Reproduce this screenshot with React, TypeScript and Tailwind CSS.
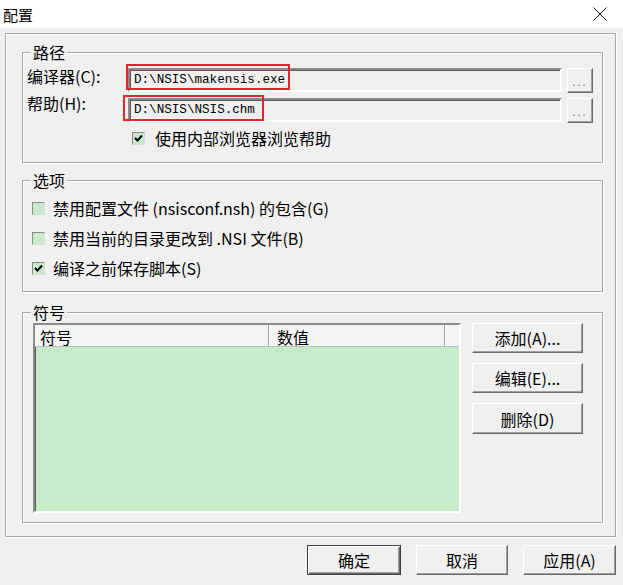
import React from 'react';

const sunken =
  'border-2 border-t-[#8a8a8a] border-l-[#8a8a8a] border-r-white border-b-white shadow-[inset_1px_1px_0_#5a5a5a]';
const raised =
  'border border-t-white border-l-white border-r-[#696969] border-b-[#696969] shadow-[inset_-1px_-1px_0_#a0a0a0] bg-[#f0f0f0]';

const Group: React.FC<{ title: string; className: string; children: React.ReactNode }> = ({ title, className, children }) => (
  <div className={`relative w-[581px] border border-[#a8a8a8] shadow-[inset_1px_1px_0_#fff,1px_1px_0_#fff] ${className}`}>
    <span className="absolute left-[8px] -top-[11px] px-[2px] bg-[#f0f0f0] leading-[20px]">{title}</span>
    {children}
  </div>
);

const CheckBox: React.FC<{ checked?: boolean }> = ({ checked }) => (
  <span className="w-[13px] h-[13px] shrink-0 flex items-center justify-center bg-[#c9e9cb] border border-t-[#8a8a8a] border-l-[#8a8a8a] border-r-[#dcdcdc] border-b-[#dcdcdc]">
    {checked && (
      <svg width="9" height="9" viewBox="0 0 9 9">
        <path d="M1 4 L3.5 6.5 L8 1.5" fill="none" stroke="#000" strokeWidth="2" />
      </svg>
    )}
  </span>
);

const PathRow: React.FC<{ label: string; value: string; labelClass: string; mark: string }> = ({ label, value, labelClass, mark }) => (
  <div className="flex items-start h-[24px]">
    <span className={`w-[101px] leading-[16px] ${labelClass}`}>{label}</span>
    <div className={`relative w-[434px] h-[24px] bg-[#f0f0f0] flex items-center pl-[4px] font-['Liberation_Mono',monospace] text-[12.6px] ${sunken}`}>
      {value}
      <span className={`absolute border-2 border-[#e0262b] ${mark}`} />
    </div>
    <button className={`ml-[5px] w-[26px] h-[25px] flex items-end justify-center pb-[5px] text-[11px] tracking-[2px] text-[#777] leading-none ${raised}`}>
      ...
    </button>
  </div>
);

const SideButton: React.FC<{ label: string; h: string }> = ({ label, h }) => (
  <button className={`w-[111px] ${h} flex items-center justify-center ${raised}`}>{label}</button>
);

export default function App() {
  return (
    <div className="w-[623px] h-[585px] bg-[#f0f0f0] text-black text-[16px] leading-none flex flex-col font-['Noto_Sans_CJK_SC','Liberation_Sans',sans-serif]">
      <div className="h-[28px] bg-white flex items-center justify-between pl-[3px] pr-[16px]">
        <span className="text-[15px]">配置</span>
        <svg width="14" height="14" viewBox="0 0 14 14">
          <path d="M0.5 0.5 L13.5 13.5 M13.5 0.5 L0.5 13.5" stroke="#111" strokeWidth="1" />
        </svg>
      </div>

      <div className="ml-[5px] mt-[5px] w-[611px] h-[504px] border border-[#a8a8a8] shadow-[inset_1px_1px_0_#fff,1px_1px_0_#fff] pl-[16px] pt-[18px] flex flex-col">
        <Group title="路径" className="h-[111px] pt-[15px] pl-[4px] flex flex-col">
          <PathRow label="编译器(C):" value="D:\NSIS\makensis.exe" labelClass="" mark="-left-[4px] -top-[6px] w-[164px] h-[26px]" />
          <div className="h-[6px]" />
          <PathRow label="帮助(H):" value="D:\NSIS\NSIS.chm" labelClass="-mt-[3px]" mark="-left-[7px] -top-[5px] w-[141px] h-[26px]" />
          <div className="mt-[6px] h-[20px] flex items-center gap-[10px] pl-[105px]">
            <CheckBox checked />
            <span>使用内部浏览器浏览帮助</span>
          </div>
        </Group>

        <Group title="选项" className="mt-[17px] h-[112px] pt-[17px] pl-[9px] flex flex-col gap-[10px]">
          <div className="h-[20px] flex items-center gap-[8px]">
            <CheckBox />
            <span>禁用配置文件 (nsisconf.nsh) 的包含(G)</span>
          </div>
          <div className="h-[20px] flex items-center gap-[8px]">
            <CheckBox />
            <span>禁用当前的目录更改到 .NSI 文件(B)</span>
          </div>
          <div className="h-[20px] flex items-center gap-[8px]">
            <CheckBox checked />
            <span>编译之前保存脚本(S)</span>
          </div>
        </Group>

        <Group title="符号" className="mt-[20px] h-[211px] pt-[10px] pl-[10px] flex gap-[11px]">
          <div className={`w-[428px] h-[190px] flex flex-col bg-[#c6ebc8] ${sunken}`}>
            <div className="h-[22px] shrink-0 flex bg-[#f4f4f4] border-b border-[#bdbdbd]">
              <div className="w-[234px] pl-[5px] flex items-end pb-[1px] border-r border-[#a0a0a0] shadow-[1px_0_0_#fff]">符号</div>
              <div className="w-[176px] pl-[8px] flex items-end pb-[1px] border-r border-[#a0a0a0] shadow-[1px_0_0_#fff]">数值</div>
              <div className="flex-1" />
            </div>
          </div>
          <div className="flex flex-col gap-[10px]">
            <SideButton label="添加(A)..." h="h-[30px]" />
            <SideButton label="编辑(E)..." h="h-[30px]" />
            <SideButton label="删除(D)" h="h-[31px]" />
          </div>
        </Group>
      </div>

      <div className="mt-[8px] pr-[7px] flex justify-end gap-[15px]">
        <button className="w-[94px] h-[30px] flex items-center justify-center bg-[#f0f0f0] border border-[#404040] shadow-[inset_1px_1px_0_#fff,inset_-1px_-1px_0_#696969,inset_-2px_-2px_0_#a0a0a0]">
          确定
        </button>
        <button className={`w-[92px] h-[30px] flex items-center justify-center ${raised}`}>取消</button>
        <button className={`w-[93px] h-[30px] flex items-center justify-center ${raised}`}>应用(A)</button>
      </div>
    </div>
  );
}
